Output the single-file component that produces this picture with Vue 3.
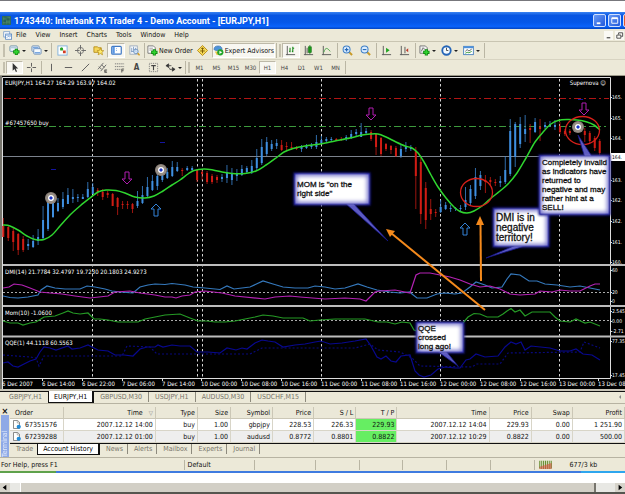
<script setup>
const icons = {
  app: '<rect width="12" height="12" fill="#2f6d5c"/><path d="M2 2h3v3H2zM7 1h3v2H7zM6 6h4v4H6zM2 8h3v2H2z" fill="#5a9a6a"/><path d="M4 1v10M8 1v10" stroke="#1b4a4a"/>',
  mdi: '<rect x="1" y="1" width="8" height="7" fill="#fff" stroke="#6a93c8"/><rect x="3.500" y="4" width="8" height="7" fill="#fff" stroke="#4c7fc0"/><path d="M4 5.500h7M5 9l2-2 2 1 1-1" stroke="#5b8fd0" fill="none"/>',
  newchart: '<rect x="1" y="1" width="8" height="6" rx="1" fill="#eaf4fb" stroke="#6f93a8"/><path d="M2 3h6" stroke="#9ab7cc"/><path d="M8 4v7M4.500 7.500h7" stroke="#138a13" stroke-width="3.400"/><path d="M8 5v5M5.500 7.500h5" stroke="#2fd32f" stroke-width="1.800"/>',
  profiles: '<rect x="1" y="1" width="8" height="6" rx="1" fill="#e4effa" stroke="#6c8db5"/><rect x="3" y="4" width="8" height="6" rx="1" fill="#f5faff" stroke="#6c8db5"/><path d="M2 3h6M4 8.500h6" stroke="#7aa8e0" stroke-width="1.500"/>',
  market: '<rect x="1" y="1" width="10" height="10" fill="#fff" stroke="#7eb0dc"/><path d="M3 5l2-2.500L7 5z" fill="#1ea01e"/><rect x="3.500" y="3" width="3" height="3" fill="#27a327"/><rect x="6.500" y="6" width="3" height="3" fill="#d23a20"/>',
  target: '<circle cx="6" cy="6" r="3.400" fill="none" stroke="#777"/><path d="M6 0v5M6 7v5M0 6h5M7 6h5" stroke="#666"/>',
  star: '<path d="M1 2h4l1 1h3v5H1z" fill="#f5d65a" stroke="#b88f1d"/><path d="M8 3.500l1.100 2.500 2.600.2-2 1.800.7 2.700L8 9.300l-2.400 1.400.7-2.700-2-1.800 2.600-.2z" fill="#ffec6b" stroke="#b88f1d" stroke-width=".8"/>',
  nav: '<rect x=".8" y="1.500" width="10.400" height="8.500" rx="1" fill="#fff" stroke="#3f78c4" stroke-width="1.300"/><rect x="1.500" y="2" width="2.600" height="7.500" fill="#5b97e2"/><path d="M5.500 4h1M5.500 6h1" stroke="#7eaee6"/>',
  tester: '<rect x="1" y="1" width="8" height="9" fill="#fff" stroke="#9ab"/><path d="M3 3v5M5 2v4M7 3v4M2.500 7h6" stroke="#7a98c0"/><circle cx="7.500" cy="7" r="2.500" fill="#cfe3fa" fill-opacity=".8" stroke="#6f94c0"/><path d="M9.500 9l2 2.300" stroke="#d29b22" stroke-width="1.600"/>',
  order: '<path d="M1 1h6l2 2v6H1z" fill="#fff" stroke="#777"/><path d="M2.500 3.500h4M2.500 5.500h4" stroke="#999"/><path d="M8 4.500v7M4.500 8h7" stroke="#138a13" stroke-width="3.400"/><path d="M8 5.500v5M5.500 8h5" stroke="#2fd32f" stroke-width="1.600"/>',
  diamond: '<path d="M6 .5L11.500 6 6 11.500.5 6z" fill="#f7dc5c" stroke="#b88a10"/><path d="M6 3v6M4.500 4.500L6 3l1.500 1.500M3.500 6.500h5" stroke="#7a5a00" fill="none"/>',
  expert: '<path d="M1 5c0-3 2-4 4.500-4S10 2 10 5l-3 1H3z" fill="#4e93d8" stroke="#2d66a8" stroke-width=".6"/><path d="M2 7h5v4H4z" fill="#e8c34a"/><circle cx="8" cy="8" r="3.400" fill="#22a52a"/><path d="M7 6.300L10 8l-3 1.700z" fill="#fff"/>',
  bars: '<path d="M2.500 1v9.500H11M1 10.500h2" stroke="#555" fill="none"/><path d="M5.500 3v5M4.500 7h1M8.500 2v6M8.500 3.500h1.500M7.500 7h1" stroke="#1c8a1c" stroke-width="1.200"/>',
  candles: '<path d="M2.500 1v9.500H11M1 10.500h2M4.500 3v6" stroke="#555" fill="none"/><rect x="6" y="2" width="3" height="6" fill="#22b022" stroke="#127012" stroke-width=".7"/><path d="M7.500 0v10" stroke="#127012" stroke-width=".8"/>',
  line: '<path d="M2.500 1v9.500H11M1 10.500h2" stroke="#555" fill="none"/><path d="M3 8c2-6 4-5 7-1" stroke="#3fa33f" fill="none"/>',
  zoomin: '<path d="M7.500 7.500L11 11" stroke="#c89a28" stroke-width="2.200"/><circle cx="5" cy="5" r="3.800" fill="#d9ecff" stroke="#3e7fc6" stroke-width="1.100"/><path d="M5 3v4M3 5h4" stroke="#2468b5" stroke-width="1.200"/>',
  zoomout: '<path d="M7.500 7.500L11 11" stroke="#c89a28" stroke-width="2.200"/><circle cx="5" cy="5" r="3.800" fill="#d9ecff" stroke="#3e7fc6" stroke-width="1.100"/><path d="M3 5h4" stroke="#2468b5" stroke-width="1.200"/>',
  scroll: '<path d="M2.500 1v9.500H11M1 10.500h2" stroke="#555" fill="none"/><path d="M5.500 3l4 2.700-4 2.700z" fill="#22a522"/>',
  shift: '<path d="M2.500 1v9.500H11M1 10.500h2M6.500 2v7" stroke="#555" fill="none"/><path d="M10 3.500L7.500 5.700 10 8z" fill="#c03a2a"/>',
  indicators: '<path d="M1 1h6l2 2v6H1z" fill="#eee" stroke="#777"/><path d="M2.500 7l2-4 2 2" stroke="#666" fill="none"/><path d="M8 4.500v7M4.500 8h7" stroke="#138a13" stroke-width="3.400"/><path d="M8 5.500v5M5.500 8h5" stroke="#2fd32f" stroke-width="1.600"/>',
  clock: '<circle cx="6" cy="6" r="4.600" fill="#f4faff" stroke="#2465b8" stroke-width="2"/><path d="M6 3v3h2" stroke="#444" fill="none"/>',
  template: '<rect x=".7" y="1.500" width="10.600" height="9" fill="#fff" stroke="#4b82bd"/><path d="M1 2.500h10" stroke="#4b90dd" stroke-width="2"/><path d="M2.500 7l2-2 2 1.500 3-2" stroke="#333" fill="none" stroke-width=".8"/><path d="M2.500 9l2-1 2 .5 3-1.500" stroke="#3a9c3a" fill="none"/>',
  cursor: '<path d="M4 1v8.500l2-2 1.500 3.500 1.300-.6L7.300 7H10z" fill="#333"/>',
  cross: '<path d="M6 1v4M6 7v4M1 6h4M7 6h4" stroke="#555"/>',
  vline: '<path d="M6 2v8" stroke="#555"/>',
  hline: '<path d="M2 6h8" stroke="#555"/>',
  trend: '<path d="M2 10l8-8" stroke="#555"/>',
  channel: '<path d="M1 8l6-7M4 10l6-7M2 5l3 3M5 3l3 3" stroke="#666"/><path d="M8.500 8.500v3M8.500 8.700h2.500M8.500 10h2M8.500 11.300h2.500" stroke="#333" stroke-width=".8"/>',
  fibo: '<path d="M1 2h10M1 5h10M1 8h6" stroke="#777" stroke-dasharray="1.500 .8"/><path d="M8.500 7.500v4M8.500 7.700h2.500M8.500 9.500h2" stroke="#333" stroke-width=".8"/>',
  boxed: '<rect x="1.500" y="1.500" width="9" height="9" fill="none" stroke="#777" stroke-dasharray="1 1"/><path d="M3.500 4h5M6 4v5" stroke="#444" stroke-width="1.200"/>',
  arrows: '<path d="M1 4l3-2v4zM4 4h3M8 6l3 2-3 2zM5 8h3M4 6l2 2" stroke="#333" fill="#333" stroke-width=".8"/>',
  doc: '<path d="M2 .7h5.500L10 3v8.300H2z" fill="#fff" stroke="#555" stroke-width=".9"/><path d="M7 1v3h3" fill="none" stroke="#777" stroke-width=".7"/><circle cx="9" cy="9" r="2.800" fill="#1f8ad8"/>',
  signal: '<path d="M.5 1v10M3 1v10M5.500 1v10M8 1v10M10.500 1v10M13 1v10M15.500 1v10" stroke="#5f8a2a" stroke-width="1.600"/><path d="M0 9L16 4v8H0z" fill="#b85a34"/><path d="M1.700 1v11M4.200 1v11M6.700 1v11M9.200 1v11M11.700 1v11M14.200 1v11" stroke="#ece9d8" stroke-width=".6"/>',
}

const menus = ['File', 'View', 'Insert', 'Charts', 'Tools', 'Window', 'Help']

const toolbar = [
  { icon: 'newchart', drop: true, label: 'New chart' },
  { icon: 'profiles', drop: true, label: 'Profiles' },
  { sep: true },
  { icon: 'market', label: 'Market watch' },
  { icon: 'target', label: 'Data window' },
  { icon: 'star', label: 'Navigator' },
  { icon: 'nav', label: 'Terminal', on: true },
  { icon: 'tester', label: 'Strategy tester' },
  { sep: true },
  { icon: 'order', text: 'New Order' },
  { icon: 'diamond', label: 'MetaEditor' },
  { icon: 'expert', text: 'Expert Advisors', on: true },
  { sep: true },
  { grip: true },
  { icon: 'bars', label: 'Bar chart', on: true },
  { icon: 'candles', label: 'Candlesticks' },
  { icon: 'line', label: 'Line chart' },
  { sep: true },
  { icon: 'zoomin', label: 'Zoom in' },
  { icon: 'zoomout', label: 'Zoom out' },
  { sep: true },
  { icon: 'scroll', label: 'Auto scroll' },
  { icon: 'shift', label: 'Chart shift' },
  { sep: true },
  { icon: 'indicators', drop: true, label: 'Indicators' },
  { icon: 'clock', drop: true, label: 'Periods' },
  { icon: 'template', drop: true, label: 'Templates' },
  { sep: true },
]
const drawTools = [
  { icon: 'cursor', label: 'Cursor', on: true },
  { icon: 'cross', label: 'Crosshair' },
  { sep: true },
  { icon: 'vline', label: 'Vertical line' },
  { icon: 'hline', label: 'Horizontal line' },
  { icon: 'trend', label: 'Trendline' },
  { icon: 'channel', label: 'Channel' },
  { icon: 'fibo', label: 'Fibonacci' },
  { letter: 'A', label: 'Text' },
  { icon: 'boxed', label: 'Text label' },
  { icon: 'arrows', drop: true, label: 'Arrows' },
  { sep: true },
  { grip: true },
]
const periods = ['M1', 'M5', 'M15', 'M30', 'H1', 'H4', 'D1', 'W1', 'MN']

// Each bar: high, body top, body bottom, low, 1 = rising
const bars = [
  [218,226,237,237,0],[225,227,238,241,0],[228,231,242,251,0],[233,234,250,255,0],[236,239,250,252,0],
  [239,244,246,250,1],[235,241,247,248,1],[229,237,241,245,1],[206,220,238,239,1],[202,203,229,231,1],
  [199,202,217,218,1],[198,203,211,212,1],[192,199,207,209,1],[188,195,204,204,1],[189,197,199,203,1],
  [194,197,198,202,1],[194,197,199,199,1],[182,189,197,198,1],[183,187,194,194,1],[188,190,192,196,0],
  [189,192,197,200,0],[191,193,195,198,0],[193,194,206,206,0],[197,198,207,215,0],[201,204,205,209,0],
  [201,204,205,209,0],[203,204,209,213,0],[191,201,206,208,1],[186,195,203,204,1],[177,187,196,198,1],
  [175,181,190,191,1],[172,176,186,190,1],[168,172,180,182,1],[168,172,178,179,1],[161,167,176,177,1],
  [162,167,171,172,1],[168,170,171,176,0],[166,168,170,171,1],[166,168,170,171,1],[169,170,180,182,0],
  [170,172,174,180,0],[171,173,182,184,0],[174,176,182,184,0],[175,177,180,183,0],[174,177,179,182,1],
  [165,172,178,183,1],[168,173,180,185,1],[169,173,176,181,1],[165,169,175,176,1],[166,168,172,173,1],
  [160,166,172,174,1],[149,158,168,170,1],[139,147,163,165,1],[137,142,154,156,1],[140,144,149,151,1],
  [139,143,146,149,1],[140,145,150,151,0],[142,146,147,151,0],[142,147,148,150,0],[146,148,149,150,0],
  [145,147,149,152,1],[144,146,148,149,1],[143,145,147,149,1],[135,142,147,149,1],[136,140,143,144,1],
  [137,139,141,142,1],[137,139,140,142,1],[138,139,140,141,0],[137,139,140,141,0],[135,137,139,141,1],
  [130,134,138,139,1],[129,132,134,137,1],[123,132,137,137,1],[128,131,133,135,1],[130,132,139,141,0],
  [133,134,147,155,0],[137,138,154,156,0],[143,144,149,151,0],[145,146,150,154,0],[146,148,156,157,0],
  [145,149,156,158,1],[142,147,149,152,1],[145,148,149,151,1],[147,151,176,209,0],[158,162,214,224,0],
  [182,188,220,229,0],[199,209,214,220,0],[209,212,213,217,0],[200,207,212,213,1],[202,205,209,210,1],
  [205,208,209,212,1],[207,208,209,211,1],[205,208,209,211,1],[187,200,207,210,1],[185,189,203,205,1],
  [168,177,196,199,1],[171,175,186,190,1],[175,180,182,193,0],[177,180,182,186,0],[179,182,183,186,0],
  [176,181,183,187,1],[156,170,182,184,1],[119,131,174,176,1],[122,124,157,167,1],[117,124,144,148,1],
  [115,129,134,142,1],[124,128,130,143,0],[118,122,132,133,1],[119,127,129,141,0],[122,125,127,129,1],
  [121,124,126,127,1],[120,125,127,130,1],[122,126,132,134,0],[129,131,134,136,0],[129,131,133,135,0],
  [124,127,131,132,1],[123,126,130,131,1],[128,131,135,142,0],[131,133,141,143,0],[136,138,148,151,0],
  [139,141,153,155,0],
]
const candles = bars.map(([h, t, b, l, up], i) => ({
  x: 3.3 + i * 4.97, h, t, b, l, color: up ? '#3f8fe0' : '#d01c14',
}))

const average = [3,225,10,226,18,230,27,236,35,239.5,44,239.5,52,235,60,226,70,215,80,206,90,198,98,192,106,190,116,190.5,125,193,135,197,145,198,154,196,163,191,172,185,180,180,188,174,194,170.5,204,169,213,170,222,172,232,173.5,245,173.5,256,171,266,165,276,158,284,152,293,148.5,305,146,320,144,335,141,350,138,362,135,370,134,378,134,386,137,396,142,405,146,412,148,418,153,424,162,431,175,438,187,446,198,454,207,460,211.5,467,213,474,211,482,206,490,199,500,191,508,184,517,173,526,158,535,142,544,131,551,124,558,120.5,567,119.5,577,120,587,122,594,125,600,130]
function smooth(flat) {
  const p = []
  for (let i = 0; i < flat.length; i += 2) p.push([flat[i], flat[i + 1]])
  let d = `M${p[0]}`
  for (let i = 0; i < p.length - 1; i++) {
    const a = p[i - 1] || p[i], b = p[i], c = p[i + 1], e = p[i + 2] || c
    d += `C${b[0] + (c[0] - a[0]) / 6} ${b[1] + (c[1] - a[1]) / 6} ${c[0] - (e[0] - b[0]) / 6} ${c[1] - (e[1] - b[1]) / 6} ${c[0]} ${c[1]}`
  }
  return d
}
const averagePath = smooth(average)

const series = [
  { color: '#3579bd', pts: '3,296 10,297.5 18,298 28,297 38,295 41,290 47,286 55,288 65,289 80,289 87,286 95,287 105,289 112,291 120,292 133,293 140,287 148,285 155,284 165,284.5 172,283.5 185,285 193,287 205,288 220,289.5 227,286 234,289 250,287 263,281 273,284 283,287 295,288 308,288 315,286 325,287 335,289 345,288 358,284 367,287 377,290 390,292 400,293 410,292 412,294 417,298 427,298 437,294 445,293 455,294 462,293 470,287 476,282 485,285 492,288 502,287 507,279 511,274 520,275 529,281 537,281 545,284 557,285 570,287 580,286 590,288 600,290' },
  { color: '#b422b4', pts: '3,288 9,287 14,284 22,285 30,288 40,292 50,293 62,294 75,296 90,298 108,296 115,292 130,291 140,293 155,295 165,297 172,297 176,298 182,296 190,295 195,292 205,291 222,293 235,296 265,299 275,297 290,296 300,297 325,299 345,298 360,299 366,301 375,292 380,291 395,290 410,293 413,284 416,275 420,273 430,273 440,275 450,277 460,280 470,284 480,287 490,286 500,289 510,294 520,295 535,294 540,291 552,292 560,290 570,291 580,291 590,286 595,284 600,284' },
  { color: '#259a25', pts: '3,321 10,323 18,323 23,325 30,323 36,322 44,317 55,316 63,313 68,311 73,313 80,314 88,313 94,319 100,319 108,320 118,322 138,322 145,319 155,317 165,315 180,314 190,318 198,321 207,321 215,322 225,322 235,321 245,319 255,317 263,315 273,316 283,318 303,318 310,321 320,320 335,319 365,319 378,322 387,322 395,324 402,322 410,323 414,330 425,334 450,334 463,323 468,317 474,313.5 480,314 487,317 498,317 503,314 507,311 511,308.5 515,312 520,310 525,316 532,312 550,312 555,317 560,321 570,322 576,319 585,323 590,322 600,326' },
  { color: '#08088f', pts: '3,363 8,362 13,366 18,367 24,364 30,361 36,359 40,352 44,347 50,348 56,350 68,346 72,349 80,348 88,345 92,347 98,350 108,351 115,355 124,355 133,356 140,349 147,347 155,347 158,345 163,347 172,345 180,346 190,346 197,352 208,352 220,353 227,348 236,350 242,348 247,349 255,343 262,340 268,341 275,342 283,347 295,345 305,344 315,342 321,341 330,344 342,343 355,341 366,339 371,346 377,357 381,359 386,356 391,361 396,362 401,356 410,355 415,371 419,375 424,377 431,375 438,369 445,367 455,368 460,368 466,360 470,359 476,354 485,357 498,356 505,347 511,342 516,344 521,342 525,350 531,346 550,348 560,351 570,351 576,349 583,354 592,355 600,360' },
  { color: '#08087a', dash: '2 2', pts: '3,355 30,357 36,358 39,366 44,356 122,356 127,346 150,347 157,354 250,354 262,348 355,348 370,344 378,350 400,352 412,358 420,366 472,367 477,364 500,364 508,353 580,352 584,342 600,348' },
]
const dayLines = [93, 198, 203, 322, 441, 560]
const dates = [[2, '6 Dec 2007'], [42, '6 Dec 14:00'], [82, '6 Dec 22:00'], [122, '7 Dec 06:00'], [162, '7 Dec 14:00'], [201, '10 Dec 00:00'], [241, '10 Dec 08:00'], [281, '10 Dec 16:00'], [321, '11 Dec 00:00'], [361, '11 Dec 08:00'], [400, '11 Dec 16:00'], [440, '12 Dec 00:00'], [480, '12 Dec 08:00'], [520, '12 Dec 16:00'], [559, '13 Dec 00:00'], [598, '13 Dec 08']]
const scale = [[97, '165.'], [118, '165.'], [138, '164.'], [180, '163.'], [200, '162.'], [221, '162.'], [242, '161.'], [262, '160.'], [270, '60'], [292, '20'], [301, '0'], [311, '2.545'], [321, '0.00'], [331, '-2.71'], [341, '77.35'], [375, '17.45']]
const paneLabels = [[85, 'EURJPY,H1  164.27 164.29 163.97 164.02'], [125, '#67457650 buy'], [274, 'DMI(14) 21.7784 32.4797 19.7230 20.1803 24.9273'], [315, 'Mom(10) -1.0600'], [345, 'QQE(1) 44.1118 60.5563']]
const coins = [[51, 198], [161, 170], [578, 127]]
const downs = [[127, 172], [371, 108], [584, 103]]
const ups = [[156, 204], [465, 223]]
const marks = [[51, 169], [160, 142], [578, 99]]
const callouts = [
  { x: 295, y: 174, w: 74, h: 30, tail: '345,203 353,203 388,241', size: 'small', tx: 297, ty: 187, step: 9, lines: ['MOM is "on the', 'right side"'] },
  { x: 494, y: 209, w: 54, h: 37, tail: '516,245 528,245 486,258', size: 'large', tx: 496, ty: 221, step: 10, lines: ['DMI is in', 'negative', 'territory!'] },
  { x: 540, y: 156, w: 69, h: 58, tail: '585,158 593,158 578,135', size: 'small', tx: 542, ty: 165, step: 9, lines: ['Completely invalid', 'as indicators have', 'returned to', 'negative and may', 'rather hint at a', 'SELL!'] },
  { x: 417, y: 323, w: 46, h: 29, tail: '437,351 446,351 458,366', size: 'small', tx: 418, ty: 331, step: 9, lines: ['QQE', 'crossed', 'long ago!'] },
]

const chartTabs = ['GBPJPY,H1', 'EURJPY,H1', 'GBPUSD,M30', 'USDJPY,H1', 'AUDUSD,M30', 'USDCHF,M15']
const cols = [53, 92, 42, 33, 42, 41, 42, 41, 92, 42, 41, 52]
const total = cols.reduce((a, b) => a + b)
const heads = ['Order', 'Time', 'Type', 'Size', 'Symbol', 'Price', 'S / L', 'T / P', 'Time', 'Price', 'Swap', 'Profit']
const rows = [
  ['67351576', '2007.12.12 14:00', 'buy', '1.00', 'gbpjpy', '228.53', '226.33', '229.93', '2007.12.12 14:04', '229.93', '0.00', '1 251.90'],
  ['67239288', '2007.12.12 01:00', 'buy', '1.00', 'audusd', '0.8772', '0.8801', '0.8822', '2007.12.12 10:29', '0.8822', '0.00', '500.00'],
]
const termTabs = ['Trade', 'Account History', 'News', 'Alerts', 'Mailbox', 'Experts', 'Journal']
</script>

<template>
  <main class="window">
    <header class="title">
      <svg class="icon app" viewBox="0 0 12 12" v-html="icons.app"></svg>
      <h1>1743440: Interbank FX Trader 4 - Demo Account - [EURJPY,H1]</h1>
      <div class="caption">
        <button aria-label="Minimise"><svg viewBox="0 0 12 12"><path d="M3 9h4" stroke="#fff" stroke-width="2" /></svg></button>
        <button aria-label="Maximise"><svg viewBox="0 0 12 12"><path d="M3 3.500h6.500V9H3z" fill="none" stroke="#fff" /><path d="M3 3.500h6.500" stroke="#fff" stroke-width="2" /></svg></button>
        <button class="close" aria-label="Close"><svg viewBox="0 0 12 12"><path d="M3 3l6 6M9 3L3 9" stroke="#fff" stroke-width="1.500" /></svg></button>
      </div>
    </header>

    <nav class="menu">
      <svg class="icon mdi" viewBox="0 0 12 12" v-html="icons.mdi"></svg>
      <button v-for="m in menus" :key="m">{{ m }}</button>
      <div class="child">
        <button aria-label="Minimise chart"><svg viewBox="0 0 10 10"><path d="M3 7.500h4" stroke="#444" stroke-width="1.300" /></svg></button>
        <button aria-label="Restore chart"><svg viewBox="0 0 10 10"><path d="M4 4V2h4.500v4H7M2 4.500h4.500V8H2z" stroke="#444" fill="none" /></svg></button>
      </div>
    </nav>

    <div class="bar main">
      <i class="grip"></i>
      <template v-for="(t, i) in toolbar" :key="i">
        <i v-if="t.sep" class="sep"></i>
        <i v-else-if="t.grip" class="grip"></i>
        <button v-else :class="{ on: t.on, drop: t.drop, wide: t.text }" :aria-label="t.label">
          <svg class="icon" viewBox="0 0 12 12" v-html="icons[t.icon]"></svg>
          <span v-if="t.text">{{ t.text }}</span>
          <i v-if="t.drop" class="caret"></i>
        </button>
      </template>
    </div>

    <div class="bar draw">
      <i class="grip"></i>
      <template v-for="(t, i) in drawTools" :key="i">
        <i v-if="t.sep" class="sep"></i>
        <i v-else-if="t.grip" class="grip"></i>
        <button v-else :class="{ on: t.on, drop: t.drop }" :aria-label="t.label">
          <b v-if="t.letter" class="letter">{{ t.letter }}</b>
          <svg v-else class="icon" viewBox="0 0 12 12" v-html="icons[t.icon]"></svg>
          <i v-if="t.drop" class="caret"></i>
        </button>
      </template>
      <button v-for="p in periods" :key="p" class="period" :class="{ on: p === 'H1' }">{{ p }}</button>
      <i class="sep"></i>
    </div>

    <svg class="chart" viewBox="0 76 625 313" role="img" aria-label="EURJPY H1 chart">
      <defs>
        <filter id="soft" x="-20%" y="-20%" width="140%" height="140%"><feGaussianBlur stdDeviation="2" /></filter>
        <filter id="glow" x="-20%" y="-20%" width="140%" height="140%"><feGaussianBlur stdDeviation="1" /></filter>
      </defs>
      <rect y="76" width="625" height="313" fill="#000" />
      <rect y="76" width="2" height="313" fill="#77756d" />
      <path d="M2.500 389V77.500H610.500V378.500H2.500" fill="none" stroke="#ddd" />
      <path v-for="x in dayLines" :key="x" :d="`M${x - 0.5} 79V378`" stroke="#d4d4d4" stroke-dasharray="2.500 2.500" />
      <path d="M4 98.500H609" stroke="#b01414" stroke-dasharray="7 3 2 3" />
      <path d="M4 126.500H606" stroke="#3d9a3d" stroke-dasharray="7 3 2 3" />
      <path d="M3 156.500H610" stroke="#7b828c" />
      <path d="M3 292.500H610M3 320.500H610" stroke="#aaa" stroke-dasharray="2 2" />
      <g v-for="(c, i) in candles" :key="i" :fill="c.color">
        <rect :x="c.x - 0.5" :y="c.h" width="1" :height="c.l - c.h" opacity=".75" />
        <rect :x="c.x - 1" :y="c.t" width="2" :height="Math.max(c.b - c.t, 1)" />
      </g>
      <path :d="averagePath" fill="none" stroke="#2fd52f" stroke-width="1.500" />
      <polyline v-for="(s, i) in series" :key="i" :points="s.pts" fill="none" :stroke="s.color" :stroke-dasharray="s.dash" stroke-width="1.200" />
      <path d="M3 265H625M3 306H625M3 336.500H625" stroke="#bcbcbc" stroke-width="2" />
      <path v-for="[x, y] in marks" :key="x" :d="`M${x} ${y + 0.5}h5`" stroke="#1414a0" />
      <path v-for="[x, y] in downs" :key="x" :d="`M${x - 2} ${y}h4v7h3l-5 5l-5 -5h3z`" fill="none" stroke="#b01cb0" />
      <path v-for="[x, y] in ups" :key="x" :d="`M${x} ${y}l5 5h-3v7h-4v-7h-3z`" fill="none" stroke="#3282d8" />
      <g v-for="[x, y] in coins" :key="x">
        <circle :cx="x" :cy="y" r="6" fill="#8d837b" />
        <circle :cx="x" :cy="y" r="4.200" fill="none" stroke="#aaa29a" stroke-width=".6" />
        <circle :cx="x" :cy="y" r="3" fill="#fff" />
        <path :d="`M${x} ${y - 2}l2 2l-2 2l-2 -2z`" fill="#1a34c8" />
      </g>
      <g fill="none" stroke="#d8201a" stroke-width="1.300">
        <ellipse cx="476.500" cy="192.500" rx="16" ry="14" />
        <ellipse cx="582.500" cy="130.500" rx="17" ry="14" />
      </g>
      <g class="label">
        <text v-for="[y, t] in paneLabels" :key="y" x="5" :y="y" xml:space="preserve">{{ t }}</text>
        <text x="606" y="85" text-anchor="end">Supernova ☺</text>
        <text v-for="[x, t] in dates" :key="x" :x="x" y="386">{{ t }}</text>
        <path v-for="[x] in dates" :key="x" :d="`M${x + 0.5} 379v2`" stroke="#ddd" />
        <template v-for="[y, t] in scale" :key="y">
          <text x="612" :y="y + 2" class="value">{{ t }}</text>
          <path :d="`M610 ${y + 0.5}h2`" stroke="#ddd" />
        </template>
        <rect x="611" y="153" width="14" height="8" fill="#fff" />
        <text x="612" y="159" class="value dark">164.</text>
      </g>
      <g v-for="c in callouts" :key="c.x">
        <rect :x="c.x" :y="c.y" :width="c.w" :height="c.h" fill="#3030b0" stroke="#1c1c8c" stroke-width="3" filter="url(#glow)" />
        <polygon :points="c.tail" fill="#5c5ac0" stroke="#16168a" stroke-width=".8" />
        <rect :x="c.x" :y="c.y" :width="c.w" :height="c.h" fill="#7472ca" stroke="#2a2aa4" />
        <rect :x="c.x + 3" :y="c.y + 3" :width="c.w - 6" :height="c.h - 6" fill="#fff" stroke="#fff" stroke-width="2" filter="url(#soft)" />
        <text v-for="(l, i) in c.lines" :key="i" :x="c.tx" :y="c.ty + i * c.step" :class="['note', c.size]">{{ l }}</text>
      </g>
      <g stroke="#f58a1c" fill="#f58a1c" stroke-width="2">
        <path d="M485 310L391 233" />
        <path d="M386 229l9 2l-5 6z" stroke="none" />
        <path d="M481 281L480.500 224" />
        <path d="M480 216l4 9h-8z" stroke="none" />
      </g>
    </svg>

    <div class="charttabs" role="tablist">
      <button v-for="(t, i) in chartTabs" :key="t" role="tab" :class="{ active: i === 1, nosep: i === 0 }">{{ t }}</button>
      <i class="more"></i>
    </div>

    <section class="terminal">
      <aside>
        <button aria-label="Close terminal">×</button>
        <span class="strip">Terminal</span>
      </aside>
      <div class="panel">
        <table>
          <colgroup><col v-for="(c, i) in cols" :key="i" :style="{ width: (c / total) * 100 + '%' }"></colgroup>
          <thead>
            <tr><th v-for="(h, i) in heads" :key="i">{{ h }}<span v-if="i === 1" class="sort">▽</span></th></tr>
          </thead>
          <tbody>
            <tr v-for="r in rows" :key="r[0]">
              <td v-for="(v, i) in r" :key="i" :class="{ hit: i === 7 }">
                <svg v-if="i === 0" class="icon" viewBox="0 0 12 12" v-html="icons.doc"></svg>{{ v }}
              </td>
            </tr>
          </tbody>
        </table>
        <div class="termtabs" role="tablist">
          <button v-for="(t, i) in termTabs" :key="t" role="tab" :class="{ active: i === 1, nosep: i === 0 }">{{ t }}</button>
        </div>
      </div>
    </section>

    <footer class="status">
      <span class="help">For Help, press F1</span>
      <span class="profile">Default</span>
      <span class="cell first"></span>
      <span v-for="n in 5" :key="n" class="cell"></span>
      <span class="traffic"><svg viewBox="0 0 16 12" v-html="icons.signal"></svg>677/3 kb</span>
    </footer>
    <div class="edge"></div>
    <div class="gap"></div>
    <div class="scroll">
      <button aria-label="Scroll left"><svg viewBox="0 0 10 10"><path d="M7 2v6L3 5z" /></svg></button>
      <div class="track"><div class="thumb"></div></div>
      <button aria-label="Scroll right"><svg viewBox="0 0 10 10"><path d="M4 2v6l4-3z" /></svg></button>
    </div>
  </main>
</template>

<style>
body { margin: 0; background: #fff; }
</style>

<style scoped>
.window {
  display: flex;
  flex-direction: column;
  border-top: 1px solid #77777c;
  border-bottom: 2px solid #55554f;
  padding-top: 11px;
  overflow: hidden;
  background: #fff;
  color: #111;
  font: 7px/10px "DejaVu Sans Condensed", "DejaVu Sans", sans-serif;
}
button {
  font: inherit;
  color: inherit;
  background: none;
  border: 0;
  padding: 0;
  margin: 0;
}
svg { display: block; flex: none; }
.icon { width: 11px; height: 11px; }

.title {
  display: flex;
  align-items: center;
  height: 17px;
  padding-left: 2px;
  overflow: hidden;
  background: linear-gradient(#3a83f2, #0855e2 20%, #0557e8 60%, #0a62fa 85%, #0344c0);
}
.title .app { width: 9px; height: 9px; }
h1 {
  margin: 0 0 0 3px;
  font: bold 9px/14px Roboto, "Liberation Sans", sans-serif;
  color: #fff;
  white-space: nowrap;
}
.caption { display: flex; gap: 2px; margin-left: auto; margin-right: -11px; }
.caption button {
  width: 13px;
  height: 13px;
  box-sizing: border-box;
  border: 1px solid #cfe0ff;
  border-radius: 2px;
  background: linear-gradient(135deg, #6a9bf4, #2058dc);
}
.caption svg { width: 11px; height: 11px; }
.caption .close { background: #e2592c; }

.menu {
  display: flex;
  align-items: center;
  gap: 9px;
  height: 12px;
  padding-left: 3px;
  background: #ece9d8;
}
.menu .icon { width: 9px; height: 9px; margin-right: -5px; }
.child { display: flex; gap: 2px; margin-left: auto; padding-right: 1px; }
.child button { width: 9px; height: 9px; background: #faf9f4; }

.bar {
  display: flex;
  align-items: stretch;
  padding: 1px 0 1px 2px;
  background: #ece9d8;
  border-top: 1px solid #c9c5b2;
}
.main { height: 15px; }
.draw { height: 13px; border-top-color: #d8d4c2; border-bottom: 1px solid #9d9a8a; }
.bar button {
  display: flex;
  align-items: center;
  justify-content: center;
  gap: 2px;
  box-sizing: border-box;
  width: 18px;
  border: 1px solid transparent;
}
.bar button.drop { width: 22px; }
.bar button.wide { width: auto; padding: 0; gap: 1px; white-space: nowrap; }
.bar button.on { background: #f8f7f1; border-color: #bdb9a8 #fff #fff #bdb9a8; }
.draw button { width: 17px; color: #444; }
.draw button.period { font-size: 6px; }
.letter { font-size: 8px; }
.caret { border: 2px solid transparent; border-top-color: #222; border-bottom: 0; }
.sep { width: 1px; margin: 0 1px; background: #bab6a4; flex: none; }
.grip { width: 2px; margin: 1px 1px; background: #c4c0ae; flex: none; }

.chart { width: 100%; height: auto; }
.label text { font: 6px "DejaVu Sans Condensed", "DejaVu Sans", sans-serif; fill: #fff; }
.label .value { font-size: 5px; }
.label .dark { fill: #000; }
.note { font-family: "Liberation Sans", sans-serif; fill: #111; stroke: #111; stroke-width: .3px; }
.small { font-size: 8px; }
.large { font-size: 10px; }

.charttabs {
  display: flex;
  align-items: flex-start;
  height: 13px;
  border-top: 2px solid #c8c5b8;
  box-shadow: inset 0 1px #111, inset 0 -1px #b7b3a2;
  padding-left: 3px;
  background: #ece9d8;
  color: #77746a;
}
.charttabs button, .termtabs button {
  padding: 0 6px;
  line-height: 10px;
  margin-top: 1px;
  border-right: 1px solid #8d8a7d;
  white-space: nowrap;
}
.termtabs button { padding: 0 4px 0 6px; margin-top: 0; }
.charttabs .nosep, .termtabs .nosep { border-right: 0; }
.charttabs .active, .termtabs .active {
  border: 1px solid #111;
  border-top: 0;
  border-right-width: 2px;
  background: #fff;
  color: #000;
  padding: 0 5px;
  margin-top: 0;
}
.charttabs .active { padding-top: 1px; }
.more { margin: 4px 4px 0 auto; border: 2px solid transparent; border-right-color: #888; border-left: 0; }

.terminal { display: flex; background: #ece9d8; padding-top: 3px; }
aside { display: flex; flex-direction: column; align-items: center; width: 10px; flex: none; }
aside button { height: 8px; line-height: 8px; font-size: 9px; font-weight: bold; }
.strip {
  flex: 1;
  width: 8px;
  writing-mode: vertical-rl;
  transform: rotate(180deg);
  line-height: 8px;
  background: #8ea9e6;
  color: #dfe8fb;
}
.panel { flex: 1; min-width: 0; }
table { width: 100%; table-layout: fixed; border-collapse: collapse; background: #fff; }
th, td {
  height: 11px;
  padding: 0 2px;
  text-align: right;
  font-weight: normal;
  line-height: 10px;
  white-space: nowrap;
  border-right: 1px solid #d8d5c8;
  border-bottom: 1px solid #d8d5c8;
}
th { background: #ebe8d8; border-color: #cbc7b6; }
th:first-child { text-align: left; padding-left: 5px; }
td:first-child { text-align: left; padding-left: 2px; }
td .icon { display: inline-block; width: 9px; height: 9px; margin-right: 4px; vertical-align: middle; }
tbody tr:nth-child(2) { background: #eeeeee; }
td.hit { background: #66ee62; }
.sort { margin-left: 6px; font-size: 6px; color: #888; }
.termtabs { display: flex; height: 13px; border-top: 1px solid #111; color: #77746a; }
.termtabs button { height: 10px; }
.termtabs .active { height: 11px; }

.status {
  display: flex;
  align-items: center;
  height: 13px;
  border-top: 1px solid #b7b3a2;
  background: #ece9d8;
}
.status span { height: 10px; box-sizing: border-box; border-right: 1px solid #b9b5a3; }
.status .help { flex: 188; padding-left: 1px; }
.status .profile { flex: 68; padding-left: 3px; }
.status .cell { flex: 44; }
.status .first { flex: 62; }
.status .traffic { display: flex; align-items: center; gap: 17px; flex: 90; padding-left: 3px; border: 0; }
.traffic svg { width: 15px; height: 9px; }
.edge { height: 2px; background: linear-gradient(90deg, #5fa24c 9%, #3f7be0 9%, #3f7be0 93%, #2ea6ee 93%); }
.gap { height: 10px; }
.scroll { display: flex; height: 9px; background: #e8e8e4; }
.scroll button { width: 10px; background: #d6d3ca; }
.scroll svg { width: 9px; height: 9px; }
.track { flex: 1; padding: 0 19px 0 10px; }
.thumb { height: 9px; background: #d2cfc6; border-right: 2px solid #77756d; border-left: 1px solid #fff; box-sizing: border-box; }
</style>
